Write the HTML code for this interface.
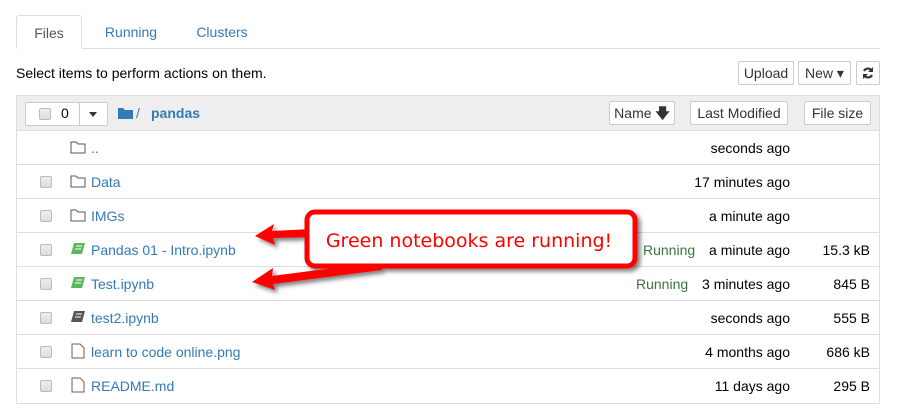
<!DOCTYPE html>
<html><head><style>
*{box-sizing:border-box;margin:0;padding:0}
body{width:899px;height:414px;background:#fff;font-family:"Liberation Sans",sans-serif;font-size:14px;color:#000;position:relative;overflow:hidden}
.a{position:absolute}
.tabline{left:16px;top:48px;width:864px;height:1px;background:#ddd}
.tab{top:15px;height:34px;line-height:34px;text-align:center;color:#337ab7;font-size:14px}
.btn{border:1px solid #ccc;border-radius:2px;background:#fff;height:24px;line-height:22px;font-size:14px;text-align:center;color:#333}
.panel{left:16px;top:95px;width:864px;height:309px;border:1px solid #ddd}
.hdr{left:17px;top:96px;width:862px;height:35px;background:#eee;border-bottom:1px solid #ddd}
.row{left:17px;width:862px;height:34px;border-bottom:1px solid #ddd}
.cb{position:absolute;left:23px;top:11px;width:12px;height:12px;border:1px solid #bbb;border-radius:2px;background:linear-gradient(#eee,#ddd)}
.nm{position:absolute;left:74px;top:9px;color:#337ab7}
.tm{position:absolute;right:89px;top:9px;color:#000}
.sz{position:absolute;right:9px;top:9px}
.ic{position:absolute;left:53px;top:9px}
.run{position:absolute;top:9px;color:#3c763d}
</style></head><body>
<div class="a tabline"></div>
<div class="a tab" style="left:16px;width:66px;border:1px solid #ddd;border-bottom:1px solid #fff;border-radius:3px 3px 0 0;color:#555;background:#fff">Files</div>
<div class="a tab" style="left:92px;width:78px">Running</div>
<div class="a tab" style="left:184px;width:76px">Clusters</div>
<div class="a" style="left:16px;top:65px">Select items to perform actions on them.</div>
<div class="a btn" style="left:738px;top:61px;width:56px">Upload</div>
<div class="a btn" style="left:798px;top:61px;width:53px">New ▾</div>
<div class="a btn" style="left:856px;top:61px;width:24px"><svg width="14" height="14" style="margin-top:4px"><path d="M11 5A4.5 4.5 0 0 0 3 5M3 9a4.5 4.5 0 0 0 8 0" fill="none" stroke="#333" stroke-width="2.2"/><path d="M12 1v5H7z M2 13V8h5z" fill="#333"/></svg></div>
<div class="a panel"></div>
<div class="a hdr">
 <div class="a" style="left:8px;top:6px;width:83px;height:24px;border:1px solid #ccc;border-radius:2px;background:#fff"></div>
 <div class="a" style="left:62px;top:6px;width:1px;height:24px;background:#ccc"></div>
 <div class="a" style="left:22px;top:12px;width:12px;height:12px;border:1px solid #bbb;border-radius:2px;background:linear-gradient(#eee,#ddd)"></div>
 <div class="a" style="left:44px;top:9px">0</div>
 <div class="a" style="left:72px;top:16px;border:4px solid transparent;border-top:5px solid #333"></div>
 <svg class="a" style="left:101px;top:11px" width="15" height="12"><path d="M0 1h5l2 2h8v9H0z" fill="#337ab7"/></svg>
 <div class="a" style="left:119px;top:9px;color:#337ab7">/</div>
 <div class="a" style="left:134px;top:9px;color:#337ab7;font-weight:bold">pandas</div>
 <div class="a btn" style="left:592px;top:5px;width:66px">Name <b>🡇</b></div>
 <div class="a btn" style="left:673px;top:5px;width:98px">Last Modified</div>
 <div class="a btn" style="left:787px;top:5px;width:67px">File size</div>
</div>
<div class="a row" style="top:131px"><svg class="ic" width="16" height="14"><path d="M1 2h5l2 2h7v9H1z" fill="none" stroke="#555"/></svg><div class="nm">..</div><div class="tm">seconds ago</div></div>
<div class="a row" style="top:165px"><div class="cb"></div><svg class="ic" width="16" height="14"><path d="M1 2h5l2 2h7v9H1z" fill="none" stroke="#555"/></svg><div class="nm">Data</div><div class="tm">17 minutes ago</div></div>
<div class="a row" style="top:199px"><div class="cb"></div><svg class="ic" width="16" height="14"><path d="M1 2h5l2 2h7v9H1z" fill="none" stroke="#555"/></svg><div class="nm">IMGs</div><div class="tm">a minute ago</div></div>
<div class="a row" style="top:233px"><div class="cb"></div><svg class="ic" width="16" height="14"><path d="M4 1h11l-3 11H1z" fill="#5cb85c"/><path d="M6 4h6M5 7h6" stroke="#fff"/></svg><div class="nm">Pandas 01 - Intro.ipynb</div><div class="run" style="left:626px">Running</div><div class="tm">a minute ago</div><div class="sz">15.3 kB</div></div>
<div class="a row" style="top:267px"><div class="cb"></div><svg class="ic" width="16" height="14"><path d="M4 1h11l-3 11H1z" fill="#5cb85c"/><path d="M6 4h6M5 7h6" stroke="#fff"/></svg><div class="nm">Test.ipynb</div><div class="run" style="left:619px">Running</div><div class="tm">3 minutes ago</div><div class="sz">845 B</div></div>
<div class="a row" style="top:301px"><div class="cb"></div><svg class="ic" width="16" height="14"><path d="M4 1h11l-3 11H1z" fill="#555"/><path d="M6 4h6M5 7h6" stroke="#fff"/></svg><div class="nm">test2.ipynb</div><div class="tm">seconds ago</div><div class="sz">555 B</div></div>
<div class="a row" style="top:335px"><div class="cb"></div><svg class="ic" width="16" height="16" style="top:8px"><path d="M2 1h8l4 4v10H2z" fill="none" stroke="#8a5050"/></svg><div class="nm">learn to code online.png</div><div class="tm">4 months ago</div><div class="sz">686 kB</div></div>
<div class="a row" style="top:369px;border-bottom:none"><div class="cb"></div><svg class="ic" width="16" height="16" style="top:8px"><path d="M2 1h8l4 4v10H2z" fill="none" stroke="#8a5050"/></svg><div class="nm">README.md</div><div class="tm">11 days ago</div><div class="sz">295 B</div></div>
<svg class="a" style="left:0;top:0" width="899" height="414">
 <defs><filter id="s"><feDropShadow dx="3" dy="3" stdDeviation="2" flood-opacity="0.5"/></filter></defs>
 <g filter="url(#s)" fill="#f00">
  <path d="M312 229 L272 231 L274 224 L255 236 L275 245 L273 238 L312 237z"/>
  <path d="M380 262 L272 276 L273 268 L252 282 L275 290 L273 284 L382 270z"/>
  <rect x="307" y="212" width="328" height="54" rx="8" fill="#fff" stroke="#f00" stroke-width="5"/>
 </g>
 <text x="469" y="247" text-anchor="middle" font-family="DejaVu Sans,sans-serif" font-size="19" fill="#f00">Green notebooks are running!</text>
</svg>
</body></html>
